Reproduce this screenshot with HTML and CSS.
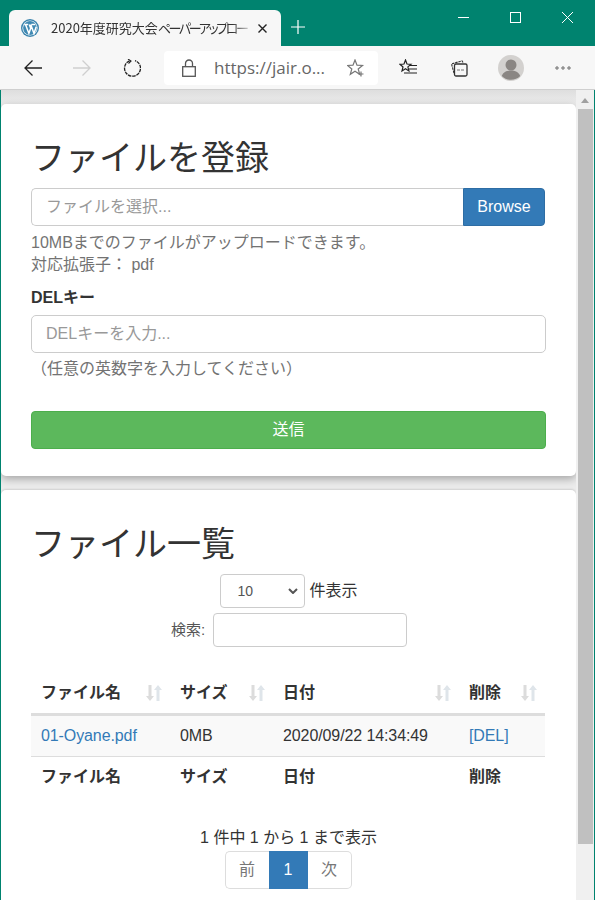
FILE: index.html
```html
<!DOCTYPE html>
<html lang="ja">
<head>
<meta charset="utf-8">
<title>2020年度研究大会ペーパーアップロード</title>
<link rel="stylesheet" href="styles.css">
</head>
<body>
<div class="window">
  <header class="titlebar">
    <div class="tab">
      <svg class="favicon" viewBox="0 0 18 18"><circle cx="9" cy="9" r="9" fill="#3a83ad"/><circle cx="9" cy="9" r="7.6" fill="#fff"/><circle cx="9" cy="9" r="6.9" fill="#3f89b3"/><path d="M3.2 5.4h4M10.4 5.4h4M4.5 5.4l3.4 9 1.8-5.2-1.4-3.8M9.7 5.4l3.3 9 2.2-6.6" fill="none" stroke="#fff" stroke-width="1.5"/></svg>
      <span class="tab-title">2020年度研究大会<span class="tab-kana">ペーパーアップロー</span></span>
      <svg class="tab-close" viewBox="0 0 9 9"><path d="M.5.5l8 8M8.5.5l-8 8" stroke="#222" stroke-width="1.4"/></svg>
    </div>
    <svg class="new-tab" viewBox="0 0 14 14"><path d="M7 0v14M0 7h14" stroke="#fff" stroke-width="1.2"/></svg>
    <div class="win-controls">
      <svg class="win-btn" viewBox="0 0 11 11"><path d="M0 5.5h11" stroke="#fff"/></svg>
      <svg class="win-btn" viewBox="0 0 11 11"><rect x=".5" y=".5" width="10" height="10" fill="none" stroke="#fff"/></svg>
      <svg class="win-btn" viewBox="0 0 11 11"><path d="M0 0l11 11M11 0L0 11" stroke="#fff"/></svg>
    </div>
  </header>
  <nav class="toolbar">
    <svg class="tool back" viewBox="0 0 18 18"><path d="M18 9H1M8.5 1.5L1 9l7.5 7.5" fill="none" stroke="#222" stroke-width="1.3"/></svg>
    <svg class="tool forward" viewBox="0 0 18 18"><path d="M0 9h17M9.500 1.500L17 9l-7.500 7.500" fill="none" stroke="#cfcfcf" stroke-width="1.3"/></svg>
    <svg class="tool reload" viewBox="0 0 18 18"><path d="M6.500 1.800A8 8 0 1 0 12 1.600" fill="none" stroke="#222" stroke-width="1.3" stroke-dasharray="3.500 .8"/><path d="M5 0l3 2-2.500 2.500" fill="none" stroke="#222" stroke-width="1.100"/></svg>
    <div class="address">
      <svg class="lock" viewBox="0 0 14 18"><rect x=".7" y="7.700" width="12.600" height="9.600" fill="none" stroke="#555" stroke-width="1.300"/><path d="M3.500 7.500V4.500a3.500 3.500 0 0 1 7 0v3" fill="none" stroke="#555" stroke-width="1.300"/></svg>
      <span class="url">https://jair.o...</span>
      <svg class="star" viewBox="0 0 18 18"><path d="M8 1l2 5.200 5.500.3-4.300 3.500 1.500 5.300L8 12.300l-4.700 3 1.500-5.300L.5 6.500 6 6.200z" fill="none" stroke="#777" stroke-width="1.200"/><path d="M14 12.500v5M11.500 15h5" stroke="#777" stroke-width="1.200"/></svg>
    </div>
    <svg class="tool favs" viewBox="0 0 19 18"><path d="M6.500 1l1.500 4 4 .3-3.100 2.600 1 4L6.500 9.800 3 12l1-4L1 5.300l4-.3z" fill="none" stroke="#222" stroke-width="1.200"/><path d="M10 6.500h8M10 10h8M5 14h13" stroke="#222" stroke-width="1.200"/></svg>
    <svg class="tool colls" viewBox="0 0 18 18"><path d="M4 14L1.500 5 12 1.800l1.200 2" fill="none" stroke="#333" stroke-width="1.100" stroke-dasharray="2.500 .8"/><rect x="4.500" y="5" width="12.500" height="12" rx="1.500" fill="none" stroke="#333" stroke-width="1.300"/><path d="M7 11h8" stroke="#777" stroke-width="1" stroke-dasharray="3 1"/></svg>
    <div class="avatar"><svg viewBox="0 0 26 26"><circle cx="13" cy="13" r="13" fill="#d3d1cf"/><circle cx="13" cy="10" r="5.500" fill="#8a8683"/><path d="M3.800 21c1.500-4 5-5.500 9.200-5.500s7.700 1.500 9.200 5.500a13 13 0 0 1-18.400 0z" fill="#8a8683"/></svg></div>
    <svg class="tool more" viewBox="0 0 16 4"><circle cx="2" cy="2" r="1.200" fill="none" stroke="#444" stroke-width=".8"/><circle cx="8" cy="2" r="1.200" fill="none" stroke="#444" stroke-width=".8"/><circle cx="14" cy="2" r="1.200" fill="none" stroke="#444" stroke-width=".8"/></svg>
  </nav>
  <div class="viewport">
    <main class="page">
      <section class="card card-upload">
        <h2>ファイルを登録</h2>
        <div class="file-group">
          <div class="file-input">ファイルを選択...</div>
          <div class="browse">Browse</div>
        </div>
        <p class="help">10MBまでのファイルがアップロードできます。<br>対応拡張子： pdf</p>
        <label class="field-label" for="delkey">DELキー</label>
        <input class="text-input" id="delkey" type="text" placeholder="DELキーを入力...">
        <p class="note">（任意の英数字を入力してください）</p>
        <button class="submit" type="button">送信</button>
      </section>
      <section class="card card-list">
        <h2>ファイル一覧</h2>
        <div class="length-row">
          <div class="select">10<svg class="chevron" viewBox="0 0 10 6"><path d="M1 1l4 4 4-4" fill="none" stroke="#555" stroke-width="2"/></svg></div>
          <span>件表示</span>
        </div>
        <div class="search-row">
          <label class="search-label" for="search">検索:</label>
          <input class="search-input" id="search" type="text">
        </div>
        <table class="files">
          <colgroup><col class="c1"><col class="c2"><col class="c3"><col class="c4"></colgroup>
          <thead>
            <tr>
              <th><div class="th-inner">ファイル名<svg class="sort" viewBox="0 0 16 16"><path class="sort-down" d="M2.500 0h3v11H8l-4 5-4-5h2.500z"/><path class="sort-up" d="M10.500 16h3V5H16l-4-5-4 5h2.500z"/></svg></div></th>
              <th><div class="th-inner">サイズ<svg class="sort" viewBox="0 0 16 16"><path class="sort-down" d="M2.500 0h3v11H8l-4 5-4-5h2.500z"/><path class="sort-up" d="M10.500 16h3V5H16l-4-5-4 5h2.500z"/></svg></div></th>
              <th><div class="th-inner">日付<svg class="sort" viewBox="0 0 16 16"><path class="sort-down" d="M2.500 0h3v11H8l-4 5-4-5h2.500z"/><path class="sort-up" d="M10.500 16h3V5H16l-4-5-4 5h2.500z"/></svg></div></th>
              <th><div class="th-inner">削除<svg class="sort" viewBox="0 0 16 16"><path class="sort-down" d="M2.500 0h3v11H8l-4 5-4-5h2.500z"/><path class="sort-up" d="M10.500 16h3V5H16l-4-5-4 5h2.500z"/></svg></div></th>
            </tr>
          </thead>
          <tbody>
            <tr><td><a href="#">01-Oyane.pdf</a></td><td>0MB</td><td>2020/09/22 14:34:49</td><td><a href="#">[DEL]</a></td></tr>
          </tbody>
          <tfoot>
            <tr><th>ファイル名</th><th>サイズ</th><th>日付</th><th>削除</th></tr>
          </tfoot>
        </table>
        <div class="info">1 件中 1 から 1 まで表示</div>
        <div class="pager">
          <span class="pg pg-prev">前</span><span class="pg pg-cur">1</span><span class="pg pg-next">次</span>
        </div>
      </section>
    </main>
    <aside class="scrollbar">
      <div class="sb-up"></div>
      <div class="sb-thumb"></div>
    </aside>
  </div>
</div>
</body>
</html>
```
FILE: styles.css
```css
* { box-sizing: border-box; }
html, body { margin: 0; height: 100%; overflow: hidden; }
body {
  font-family: "Liberation Sans", "Noto Sans CJK JP", sans-serif;
  font-size: 16px;
  line-height: 22px;
  color: #333;
}
.window {
  width: 595px;
  height: 900px;
  display: flex;
  flex-direction: column;
  background: #00836f;
  padding: 0 1px;
}
.titlebar {
  height: 46px;
  flex: none;
  display: flex;
  align-items: flex-end;
  margin: 0 -1px;
  padding-left: 9px;
}
.tab {
  width: 272px;
  height: 36px;
  background: #f7f7f7;
  border-radius: 6px 6px 0 0;
  display: flex;
  align-items: center;
  padding: 0 14px 0 12px;
  font-family: "Noto Sans CJK JP", sans-serif;
}
.favicon { width: 18px; height: 18px; flex: none; }
.tab-title {
  margin-left: 12px;
  width: 197px;
  flex: none;
  font-size: 13px;
  white-space: nowrap;
  color: #333;
  line-height: 18px;
  -webkit-mask-image: linear-gradient(90deg, #000 92%, rgba(0, 0, 0, .25) 100%);
  mask-image: linear-gradient(90deg, #000 92%, rgba(0, 0, 0, .25) 100%);
}
.tab-kana { font-feature-settings: "palt"; letter-spacing: -2.4px; }
.tab-close { width: 9px; height: 9px; margin-left: 10px; flex: none; }
.new-tab { width: 14px; height: 14px; margin: 0 0 12px 10px; flex: none; }
.win-controls {
  margin-left: auto;
  align-self: flex-start;
  display: flex;
  gap: 41px;
  padding: 12px 22px 0 0;
}
.win-btn { width: 11px; height: 11px; display: block; }
.toolbar {
  height: 44px;
  flex: none;
  background: #f7f7f7;
  border-bottom: 1px solid #cfcfcf;
  display: flex;
  align-items: center;
  margin: 0 -1px;
  padding: 1px 0 0;
}
.tool { width: 18px; height: 18px; flex: none; }
.back { margin-left: 24px; }
.forward { margin-left: 31px; }
.reload { margin-left: 32px; }
.address {
  margin-left: 23px;
  width: 214px;
  height: 34px;
  background: #fff;
  border-radius: 4px;
  display: flex;
  align-items: center;
  padding-left: 18px;
}
.lock { width: 14px; height: 18px; flex: none; }
.url {
  margin-left: 18px;
  font-family: "Open Sans", sans-serif;
  font-size: 17px;
  color: #666;
  width: 115px;
  white-space: nowrap;
}
.star { width: 18px; height: 18px; margin-left: 18px; flex: none; }
.favs { width: 19px; margin-left: 21px; }
.colls { margin-left: 32px; }
.avatar { width: 26px; height: 26px; margin-left: 30px; flex: none; }
.avatar svg { display: block; width: 26px; height: 26px; }
.more { width: 16px; height: 4px; margin-left: 31px; }
.viewport {
  flex: 1;
  min-height: 0;
  display: flex;
  overflow: hidden;
}
.page {
  flex: none;
  width: 575px;
  background: linear-gradient(#dedede, #ececec 14px);
  padding-top: 14px;
  overflow: hidden;
}
.card {
  background: #fff;
  border-radius: 5px;
  padding: 30px 30px 0;
}
.card-upload {
  height: 372px;
  box-shadow: 0 3px 9px rgba(0, 0, 0, .3);
}
.card-list {
  margin-top: 14px;
  height: 500px;
  padding-top: 30px;
  box-shadow: 0 -1px 2px rgba(0, 0, 0, .12);
}
h2 {
  margin: 0;
  font-family: "Noto Sans CJK JP", sans-serif;
  font-weight: 400;
  font-size: 34px;
  line-height: 44px;
  color: #333;
}
.file-group { display: flex; height: 38px; margin-top: 10px; width: 514px; }
.file-input {
  flex: 1;
  border: 1px solid #ccc;
  border-right: 0;
  border-radius: 5px 0 0 5px;
  padding: 7px 14px;
  color: #999;
}
.browse {
  width: 82px;
  background: #337ab7;
  border: 1px solid #2e6da4;
  border-radius: 0 4px 4px 0;
  color: #fff;
  text-align: center;
  line-height: 36px;
}
.help { margin: 6px 0 0; color: #737373; }
.field-label { display: block; margin-top: 11px; font-weight: 700; color: #333; }
.text-input {
  display: block;
  width: 515px;
  height: 38px;
  margin-top: 6px;
  border: 1px solid #ccc;
  border-radius: 5px;
  padding: 6px 14px;
  font: inherit;
  color: #555;
  background: #fff;
}
.text-input::placeholder { color: #999; opacity: 1; }
.note { margin: 5px 0 0; color: #737373; }
.submit {
  display: block;
  width: 515px;
  height: 38px;
  margin-top: 31px;
  background: #5cb85c;
  border: 1px solid #4cae4c;
  border-radius: 4px;
  color: #fff;
  font: inherit;
  line-height: 22px;
}
.length-row {
  display: flex;
  justify-content: center;
  align-items: center;
  gap: 4px;
  margin-top: 10px;
  height: 34px;
  padding-left: 1px;
}
.select {
  width: 85px;
  height: 34px;
  border: 1px solid #ccc;
  border-radius: 4px;
  display: flex;
  align-items: center;
  justify-content: space-between;
  padding: 0 6px 0 16px;
  font-size: 14px;
  color: #555;
}
.chevron { width: 10px; height: 6px; }
.search-row {
  display: flex;
  justify-content: center;
  align-items: center;
  gap: 8px;
  margin-top: 5px;
  height: 34px;
  padding-left: 1px;
  color: #555;
}
.search-label { font-size: 15px; }
.search-input {
  width: 194px;
  height: 34px;
  border: 1px solid #ccc;
  border-radius: 4px;
  background: #fff;
}
.files {
  width: 514px;
  table-layout: fixed;
  border-collapse: collapse;
  margin-top: 23px;
}
.c1 { width: 139px; }
.c2 { width: 103px; }
.c3 { width: 186px; }
.c4 { width: 86px; }
.files th { text-align: left; font-weight: 700; padding: 0 8px 0 10px; }
.files thead th { height: 44px; border-bottom: 3px solid #ddd; padding-top: 3px; }
.files tfoot th { height: 38px; padding-top: 4px; }
.files td { height: 42px; padding: 0 0 0 10px; background: #f9f9f9; border-bottom: 1px solid #ddd; letter-spacing: -.1px; }
.th-inner { display: flex; align-items: center; justify-content: space-between; }
.sort { width: 16px; height: 16px; flex: none; }
.sort-down { fill: #dcdcdc; }
.sort-up { fill: #dfe5ea; }
a { color: #337ab7; text-decoration: none; }
.info { margin-top: 33px; text-align: center; height: 22px; }
.pager { display: flex; justify-content: center; margin-top: 2px; padding-right: 1px; }
.pg {
  height: 38px;
  line-height: 36px;
  text-align: center;
  border: 1px solid #ddd;
  color: #777;
}
.pg-prev { width: 44px; border-radius: 5px 0 0 5px; border-right: 0; }
.pg-cur { width: 39px; background: #337ab7; border-color: #337ab7; color: #fff; }
.pg-next { width: 44px; border-radius: 0 5px 5px 0; border-left: 0; }
.scrollbar {
  flex: none;
  width: 18px;
  background: #f0f0f0;
  display: flex;
  flex-direction: column;
  align-items: flex-start;
  padding-left: 2px;
}
.sb-up {
  width: 0;
  height: 0;
  margin: 8px 0 0 3px;
  border-left: 4.500px solid transparent;
  border-right: 4.500px solid transparent;
  border-bottom: 5px solid #a0a0a0;
}
.sb-thumb { width: 15px; height: 735px; margin-top: 6px; background: #c0c0c0; }
```
